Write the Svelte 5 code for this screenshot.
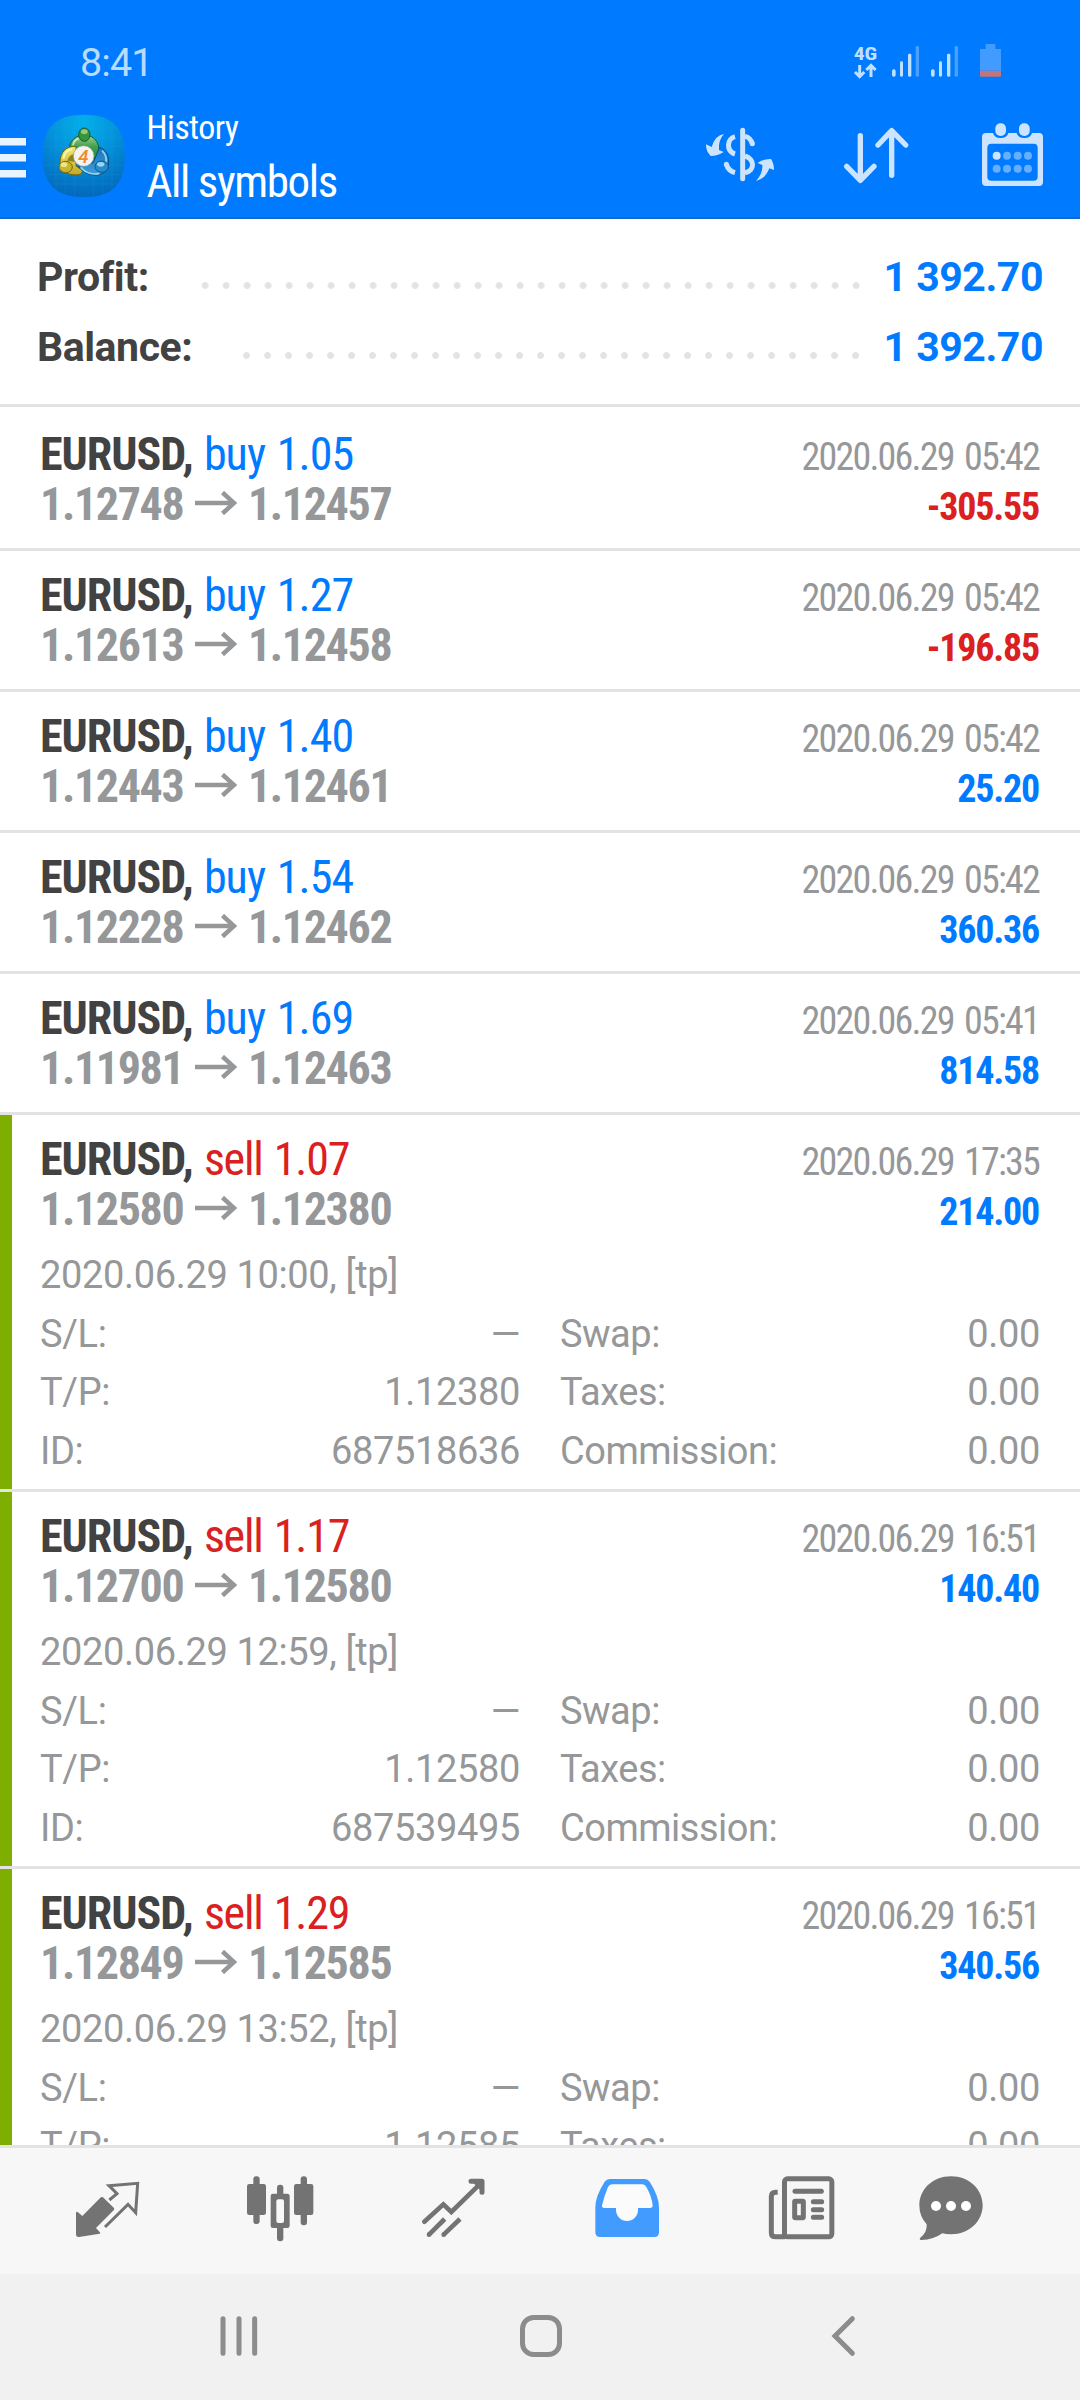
<script lang="ts">
	type Details = { opened: string; sl: string; tp: string; id?: string };

	type Deal = {
		side: 'buy' | 'sell';
		volume: string;
		open: string;
		close: string;
		time: string;
		profit: string;
		details?: Details;
	};

	const summary = [
		{ label: 'Profit:', value: '1 392.70' },
		{ label: 'Balance:', value: '1 392.70' }
	];

	const deals: Deal[] = [
		{ side: 'buy', volume: '1.05', open: '1.12748', close: '1.12457', time: '2020.06.29 05:42', profit: '-305.55' },
		{ side: 'buy', volume: '1.27', open: '1.12613', close: '1.12458', time: '2020.06.29 05:42', profit: '-196.85' },
		{ side: 'buy', volume: '1.40', open: '1.12443', close: '1.12461', time: '2020.06.29 05:42', profit: '25.20' },
		{ side: 'buy', volume: '1.54', open: '1.12228', close: '1.12462', time: '2020.06.29 05:42', profit: '360.36' },
		{ side: 'buy', volume: '1.69', open: '1.11981', close: '1.12463', time: '2020.06.29 05:41', profit: '814.58' },
		{
			side: 'sell',
			volume: '1.07',
			open: '1.12580',
			close: '1.12380',
			time: '2020.06.29 17:35',
			profit: '214.00',
			details: { opened: '2020.06.29 10:00, [tp]', sl: '—', tp: '1.12380', id: '687518636' }
		},
		{
			side: 'sell',
			volume: '1.17',
			open: '1.12700',
			close: '1.12580',
			time: '2020.06.29 16:51',
			profit: '140.40',
			details: { opened: '2020.06.29 12:59, [tp]', sl: '—', tp: '1.12580', id: '687539495' }
		},
		{
			side: 'sell',
			volume: '1.29',
			open: '1.12849',
			close: '1.12585',
			time: '2020.06.29 16:51',
			profit: '340.56',
			details: { opened: '2020.06.29 13:52, [tp]', sl: '—', tp: '1.12585' }
		}
	];
</script>

<div class="screen">
	<header>
		<div class="status">
			<span class="clock">8:41</span>
			<svg class="indicators" viewBox="0 0 480 150">
				<text x="26" y="71" textLength="71" lengthAdjust="spacingAndGlyphs">4G</text>
				<g fill="none" stroke="#bfe0ff" stroke-width="9">
					<path d="M44 87V122M30 108L44 122L58 108" />
					<path d="M78 123V88M64 102L78 88L92 102" />
				</g>
				{#each [0, 117] as x}
					<g transform="translate({x} 0)" fill="#bfe0ff">
						<rect x="141" y="100" width="11" height="22" rx="5" />
						<rect x="165" y="76" width="9" height="46" rx="4" />
						<rect x="189" y="53" width="10" height="69" rx="4" />
						<rect x="212" y="30" width="10" height="92" rx="4" opacity=".38" />
					</g>
				{/each}
				<path d="M422 24h29v15h17v65h-63V39h17z" fill="#429cff" />
				<path d="M405 104h63v15q0 3-3 3h-57q-3 0-3-3z" fill="#c1757c" />
			</svg>
		</div>

		<div class="appbar">
			<svg class="menu" viewBox="0 0 26 40" fill="#e8f4ff">
				<rect y="0" width="26" height="7.5" />
				<rect y="16" width="26" height="7.5" />
				<rect y="32" width="26" height="7.5" />
			</svg>

			<svg class="logo" viewBox="0 0 276 276">
				<defs>
					<radialGradient id="tile" cx=".5" cy=".1" r=".95">
						<stop offset="0" stop-color="#03b0ea" />
						<stop offset=".45" stop-color="#0391da" />
						<stop offset="1" stop-color="#0364b8" />
					</radialGradient>
					<linearGradient id="green" x2="0" y2="1">
						<stop offset="0" stop-color="#a3d295" />
						<stop offset=".5" stop-color="#3fa04a" />
						<stop offset="1" stop-color="#1f8f37" />
					</linearGradient>
					<linearGradient id="yellow" x2="0" y2="1">
						<stop offset="0" stop-color="#f3ea72" />
						<stop offset="1" stop-color="#c2a920" />
					</linearGradient>
					<linearGradient id="blue" x2="0" y2="1">
						<stop offset="0" stop-color="#1577bb" />
						<stop offset="1" stop-color="#3f9fdb" />
					</linearGradient>
				</defs>
				<path
					d="M138 14C224 14 260 52 260 137S224 261 138 261S14 222 14 137S52 14 138 14Z"
					fill="url(#tile)"
				/>
				<path
					d="M54 34V240M82 20V254M110 16V259M166 16V259M194 20V254M222 34V240M34 54H242M22 82H254M16 110H259M16 166H259M22 194H254M34 222H242"
					stroke="#3db4ef"
					stroke-width="1.5"
					opacity=".25"
				/>
				<g stroke-width="3">
					<path
						d="M96 134C88 104 104 76 139 75C174 76 190 106 180 140L166 146L112 128Z"
						fill="url(#green)"
						stroke="#17602d"
					/>
					<path
						d="M114 110C86 106 66 126 66 158C68 186 92 198 126 194L136 182L114 168Z"
						fill="url(#yellow)"
						stroke="#6c6514"
					/>
					<path
						d="M184 112C206 118 214 140 211 166C206 194 176 202 146 190C134 184 124 176 122 168L166 158Z"
						fill="url(#blue)"
						stroke="#074b80"
					/>
				</g>
				<path d="M128 172C144 190 166 195 184 190" fill="none" stroke="#9ad6f6" stroke-width="5" />
				<path d="M192 122C204 134 206 146 204 156" fill="none" stroke="#8bcbf0" stroke-width="6" />
				<path d="M105 106C107 94 114 88 122 86" fill="none" stroke="#d0ebc6" stroke-width="5" />
				<path d="M76 146C78 130 88 120 102 118" fill="none" stroke="#fbf6b4" stroke-width="6" />
				<path d="M88 152C92 140 98 134 108 132L110 156Z" fill="#8f831a" />
				<ellipse cx="139" cy="74" rx="17" ry="20" fill="#37953a" stroke="#155e2b" stroke-width="3" />
				<ellipse cx="139" cy="65" rx="10" ry="7" fill="#94c985" />
				<ellipse cx="83" cy="171" rx="20" ry="17" fill="#c7b52b" stroke="#746b14" stroke-width="3" />
				<ellipse cx="78" cy="164" rx="10" ry="7" fill="#ede48b" />
				<ellipse cx="191" cy="170" rx="20" ry="17" fill="#258dc9" stroke="#0d568d" stroke-width="3" />
				<ellipse cx="188" cy="163" rx="11" ry="7" fill="#9bd4f3" />
				<circle cx="137" cy="138" r="31" fill="#f4f3f1" stroke="#8d9b94" stroke-width="2" />
				<text class="four" x="136" y="158">4</text>
			</svg>

			<div class="titles">
				<div class="section">History</div>
				<div class="filter">All symbols</div>
			</div>

			<svg class="action currency" viewBox="75 300 210 210">
				<g fill="none" stroke="#cce4ff" stroke-width="15">
					<path d="M188 331V476" stroke-linecap="round" />
					<path d="M165 350C141 356 137 393 165 402" />
					<path d="M195 349Q211 352 217 371" />
					<path d="M139 433Q145 453 165 458" />
					<path d="M195 408C225 417 225 453 195 458" />
				</g>
				<circle cx="139" cy="433" r="7.5" fill="#cce4ff" />
				<circle cx="217" cy="371" r="7.5" fill="#cce4ff" />
				<path
					d="M132 342Q106 345 95 381L78 373Q77 393 92 408Q113 408 131 396L117 390Q114 361 132 342Z"
					fill="#cce4ff"
				/>
				<path
					d="M228 483Q256 477 268 445L282 450Q282 430 273 417Q251 416 233 429L247 435Q249 459 228 483Z"
					fill="#cce4ff"
				/>
			</svg>
			<svg class="action sort" viewBox="483 300 210 210">
				<g fill="none" stroke="#cce4ff" stroke-width="16" stroke-linecap="round" stroke-linejoin="round">
					<path d="M541 347V480M500 439L541 481L582 439" />
					<path d="M635 466V333M594 375L635 332L677 375" />
				</g>
			</svg>
			<svg class="action calendar" viewBox="894 300 210 210">
				<path
					fill="#cce4ff"
					fill-rule="evenodd"
					d="M918 339H939Q943 354 962 354T985 339H1010Q1014 354 1033 354T1056 339H1077Q1089 339 1089 351V486Q1089 498 1077 498H918Q906 498 906 486V351Q906 339 918 339ZM934 371Q922 371 922 383V471Q922 482 934 482H1061Q1073 482 1073 471V383Q1073 371 1061 371Z"
				/>
				<rect x="946" y="310" width="32" height="38" rx="15" fill="#cce4ff" />
				<rect x="1017" y="310" width="32" height="38" rx="15" fill="#cce4ff" />
				{#each [950, 981, 1013, 1044] as cx, i}
					<circle {cx} cy="407" r="12" fill={i === 0 ? '#cce4ff' : '#66afff'} />
					<circle {cx} cy="446" r="12" fill="#66afff" />
				{/each}
			</svg>
		</div>
	</header>

	<section class="summary">
		{#each summary as line}
			<div class="line">
				<span>{line.label}</span>
				<span class="dots"></span>
				<span class="value">{line.value}</span>
			</div>
		{/each}
	</section>

	<main>
		{#each deals as deal}
			<article class:open={deal.details}>
				<div class="head">
					<span class="symbol">EURUSD,</span>
					<span class="side {deal.side}">{deal.side} {deal.volume}</span>
					<span class="time">{deal.time}</span>
				</div>
				<div class="head">
					<span class="price">{deal.open}</span>
					<svg class="arrow" viewBox="0 0 42 24" fill="none" stroke="#969799" stroke-width="4.5">
						<path d="M0 12H39M27.5 1.5L39 12L27.5 22.5" />
					</svg>
					<span class="price">{deal.close}</span>
					<span class="profit" class:loss={deal.profit.startsWith('-')}>{deal.profit}</span>
				</div>
				{#if deal.details}
					<div class="details">
						<p>{deal.details.opened}</p>
						<dl>
							<dt>S/L:</dt>
							<dd>{deal.details.sl}</dd>
							<dt class="second">Swap:</dt>
							<dd>0.00</dd>
							<dt>T/P:</dt>
							<dd>{deal.details.tp}</dd>
							<dt class="second">Taxes:</dt>
							<dd>0.00</dd>
							{#if deal.details.id}
								<dt>ID:</dt>
								<dd>{deal.details.id}</dd>
								<dt class="second">Commission:</dt>
								<dd>0.00</dd>
							{/if}
						</dl>
					</div>
				{/if}
			</article>
		{/each}
	</main>

	<nav class="tabs">
		<!-- Quotes -->
		<svg viewBox="219 288 210 210">
			<path
				d="M309 352L342 384Q344 388 341 391L288 444L301 458L299 461L237 471Q228 472 228 462V399Q229 392 234 397L247 408L301 353Q305 349 309 352Z"
				fill="#737373"
			/>
			<path
				d="M328 360L351 341L327 317L413 310L407 398L384 373L315 441"
				fill="none"
				stroke="#737373"
				stroke-width="9"
			/>
		</svg>
		<!-- Chart -->
		<svg viewBox="735 288 210 210" fill="#737373">
			<rect x="760" y="289" width="19" height="143" rx="9" />
			<rect x="741" y="312" width="57" height="93" rx="7" />
			<rect x="902" y="289" width="19" height="147" rx="9" />
			<rect x="882" y="312" width="58" height="93" rx="7" />
			<rect x="831" y="314" width="19" height="170" rx="9" />
			<rect x="812" y="341" width="57" height="103" rx="7" />
			<rect x="829" y="358" width="23" height="71" rx="6" fill="#f7f7f7" />
		</svg>
		<!-- Trade -->
		<svg viewBox="174 288 210 210" fill="none" stroke="#737373" stroke-width="14">
			<path d="M193 425L250 373L274 396L358 314" stroke-linecap="round" />
			<path d="M333 304H366V337" stroke-linecap="round" stroke-linejoin="round" stroke-width="15" />
			<path d="M340 309H364V333Z" fill="#737373" stroke="none" />
			<path d="M207 464L254 417M251 464L300 417" />
			<circle cx="207" cy="464" r="7" fill="#737373" stroke="none" />
			<circle cx="251" cy="464" r="7" fill="#737373" stroke="none" />
		</svg>
		<!-- History -->
		<svg viewBox="696 288 210 210" fill="#429cff">
			<path
				d="M749 297H854Q863 297 869 305Q897 349 897 382V457Q897 471 883 471H720Q706 471 706 457V382Q706 349 734 305Q740 297 749 297Z"
			/>
			<path
				fill="#fbfbfb"
				d="M756 313H847Q855 313 859 321Q875 349 878 376Q878 384 870 384H834V390A33 33 0 0 1 768 390V384H733Q725 384 726 376Q733 347 744 321Q748 313 756 313Z"
			/>
		</svg>
		<!-- News -->
		<svg viewBox="141 288 210 210" fill="none" stroke="#737373" stroke-width="15">
			<rect x="193.5" y="296.5" width="142" height="174" rx="9" />
			<path d="M173 337H167Q154 337 154 349V458Q154 470.5 167 470.5H195" />
			<path d="M225 334H304" stroke-linecap="round" />
			<path d="M280 365H305M280 389H305M280 412H305" stroke-linecap="round" />
			<rect x="224" y="364" width="26" height="49" rx="2" />
		</svg>
		<!-- Messages -->
		<svg viewBox="588 288 210 210" fill="#737373">
			<path
				d="M693 289C748 289 788 328 788 376C788 424 748 463 693 463Q678 463 667 460Q641 479 604 480Q596 478 601 473Q622 457 620 433Q598 409 598 376C598 328 638 289 693 289Z"
			/>
			<g fill="#fff">
				<circle cx="648" cy="378" r="15" />
				<circle cx="693" cy="378" r="15" />
				<circle cx="738" cy="378" r="15" />
			</g>
		</svg>
	</nav>

	<nav class="system">
		<svg viewBox="645 699 144 144">
			<path d="M669 716V820M717 716V820M764 716V820" stroke-linecap="round" />
		</svg>
		<svg viewBox="471 699 144 144">
			<rect x="487.5" y="712.5" width="111" height="111" rx="34" />
		</svg>
		<svg viewBox="297 699 144 144">
			<path d="M397 716L345 768L397 820" stroke-linecap="round" />
		</svg>
	</nav>
</div>

<style>
	:global(body) {
		background: #fff;
	}

	.screen {
		display: flex;
		flex-direction: column;
		width: 1080px;
		height: 2400px;
		overflow: hidden;
		background: #fff;
		font-family: Roboto, sans-serif;
		color: #424242;
	}

	svg {
		display: block;
		flex: none;
	}

	/* Header */
	header {
		box-sizing: border-box;
		flex: none;
		height: 219px;
		background: #007aff;
		border-bottom: 2px solid #1567c8;
	}

	.status {
		display: flex;
		justify-content: space-between;
		height: 64px;
		padding: 36px 75px 0 80px;
	}

	.clock {
		font-size: 39.5px;
		line-height: 54px;
		letter-spacing: -0.9px;
		color: #b8dcff;
	}

	.indicators {
		width: 160px;
		height: 50px;
	}

	.indicators text {
		font: 700 54px 'Roboto Condensed', Roboto, sans-serif;
		fill: #bfe0ff;
	}

	.appbar {
		display: flex;
		align-items: flex-start;
		color: #fff;
	}

	.menu {
		width: 26px;
		height: 40px;
		margin-top: 38px;
	}

	.logo {
		width: 92px;
		height: 92px;
		margin: 10px 0 0 12px;
	}

	.four {
		font: italic 500 56px Roboto, sans-serif;
		text-anchor: middle;
		fill: #f08a24;
	}

	.titles {
		flex: 1;
		margin-left: 16.5px;
		font-family: 'Roboto Condensed', Roboto, sans-serif;
	}

	.section {
		margin-top: 4px;
		font-size: 34px;
		line-height: 46px;
		letter-spacing: -0.6px;
	}

	.filter {
		font-size: 45px;
		line-height: 63px;
		letter-spacing: -1.4px;
	}

	.action {
		width: 70px;
		height: 70px;
		margin-top: 20px;
	}

	.sort {
		margin-left: 66px;
	}

	.calendar {
		margin: 20px 32px 0 67px;
	}

	/* Totals */
	.summary {
		flex: none;
		padding: 23px 37px 22px;
		border-bottom: 3px solid #e3e3e3;
		font-size: 41px;
		font-weight: 700;
		line-height: 70px;
		letter-spacing: -0.45px;
	}

	.line {
		display: flex;
	}

	.dots {
		flex: 1;
		margin: 0 17px 0 43px;
		background: radial-gradient(circle, #e3e3e3 3px, transparent 3.8px) right 33px / 21px 21px repeat-x;
	}

	.value {
		color: #007aff;
	}

	/* Deals */
	main {
		flex: 1;
		min-height: 0;
		overflow: hidden;
		padding-top: 3px;
	}

	article {
		box-sizing: border-box;
		height: 141px;
		padding: 19px 40px 0;
		border-bottom: 3px solid #e3e3e3;
	}

	article.open {
		height: 377px;
		background: linear-gradient(90deg, #7eaf00 12px, transparent 12px);
		background-clip: padding-box;
	}

	.head {
		display: flex;
		align-items: baseline;
		height: 50px;
		font-family: 'Roboto Condensed', Roboto, sans-serif;
		font-size: 46px;
		line-height: 50px;
	}

	.symbol {
		font-weight: 700;
		letter-spacing: -1px;
	}

	.side {
		margin-left: 11px;
		word-spacing: 2px;
	}

	.buy {
		color: #007aff;
		letter-spacing: -0.95px;
	}

	.sell {
		color: #da2020;
		letter-spacing: -1.25px;
	}

	.price {
		font-weight: 700;
		color: #969799;
		letter-spacing: -1.35px;
	}

	.arrow {
		align-self: flex-start;
		width: 42px;
		height: 24px;
		margin: 12px 10.5px 0 12px;
	}

	.time,
	.profit {
		margin-left: auto;
		font-size: 38px;
	}

	.time {
		margin-right: 1px;
		color: #969799;
		letter-spacing: -1.8px;
		word-spacing: 3.5px;
	}

	.profit {
		margin-right: 1px;
		font-weight: 700;
		color: #007aff;
		letter-spacing: -1.2px;
	}

	.loss {
		color: #da2020;
	}

	.details {
		margin-top: 12px;
		font-size: 38px;
		line-height: 58.5px;
		letter-spacing: -0.35px;
		color: #969799;
	}

	.details p,
	.details dl,
	.details dd {
		margin: 0;
	}

	.details dl {
		display: grid;
		grid-template-columns: 120px 360px 300px 220px;
	}

	.details dd {
		text-align: right;
	}

	.second {
		padding-left: 40px;
		letter-spacing: -0.5px;
	}

	/* Bottom bars */
	.tabs {
		display: grid;
		grid-template-columns: 172px 173px 174px 175px 149px 70px;
		align-items: center;
		flex: none;
		height: 126px;
		padding-left: 73px;
		background: #f7f7f7;
		border-top: 3px solid #e3e3e3;
	}

	.tabs svg {
		width: 70px;
		height: 70px;
	}

	.system {
		display: flex;
		align-items: center;
		gap: 254px;
		flex: none;
		height: 126px;
		padding-left: 215px;
		background: #f1f1f1;
	}

	.system svg {
		width: 48px;
		height: 48px;
		fill: none;
		stroke: #8c8c8c;
		stroke-width: 15;
	}
</style>
